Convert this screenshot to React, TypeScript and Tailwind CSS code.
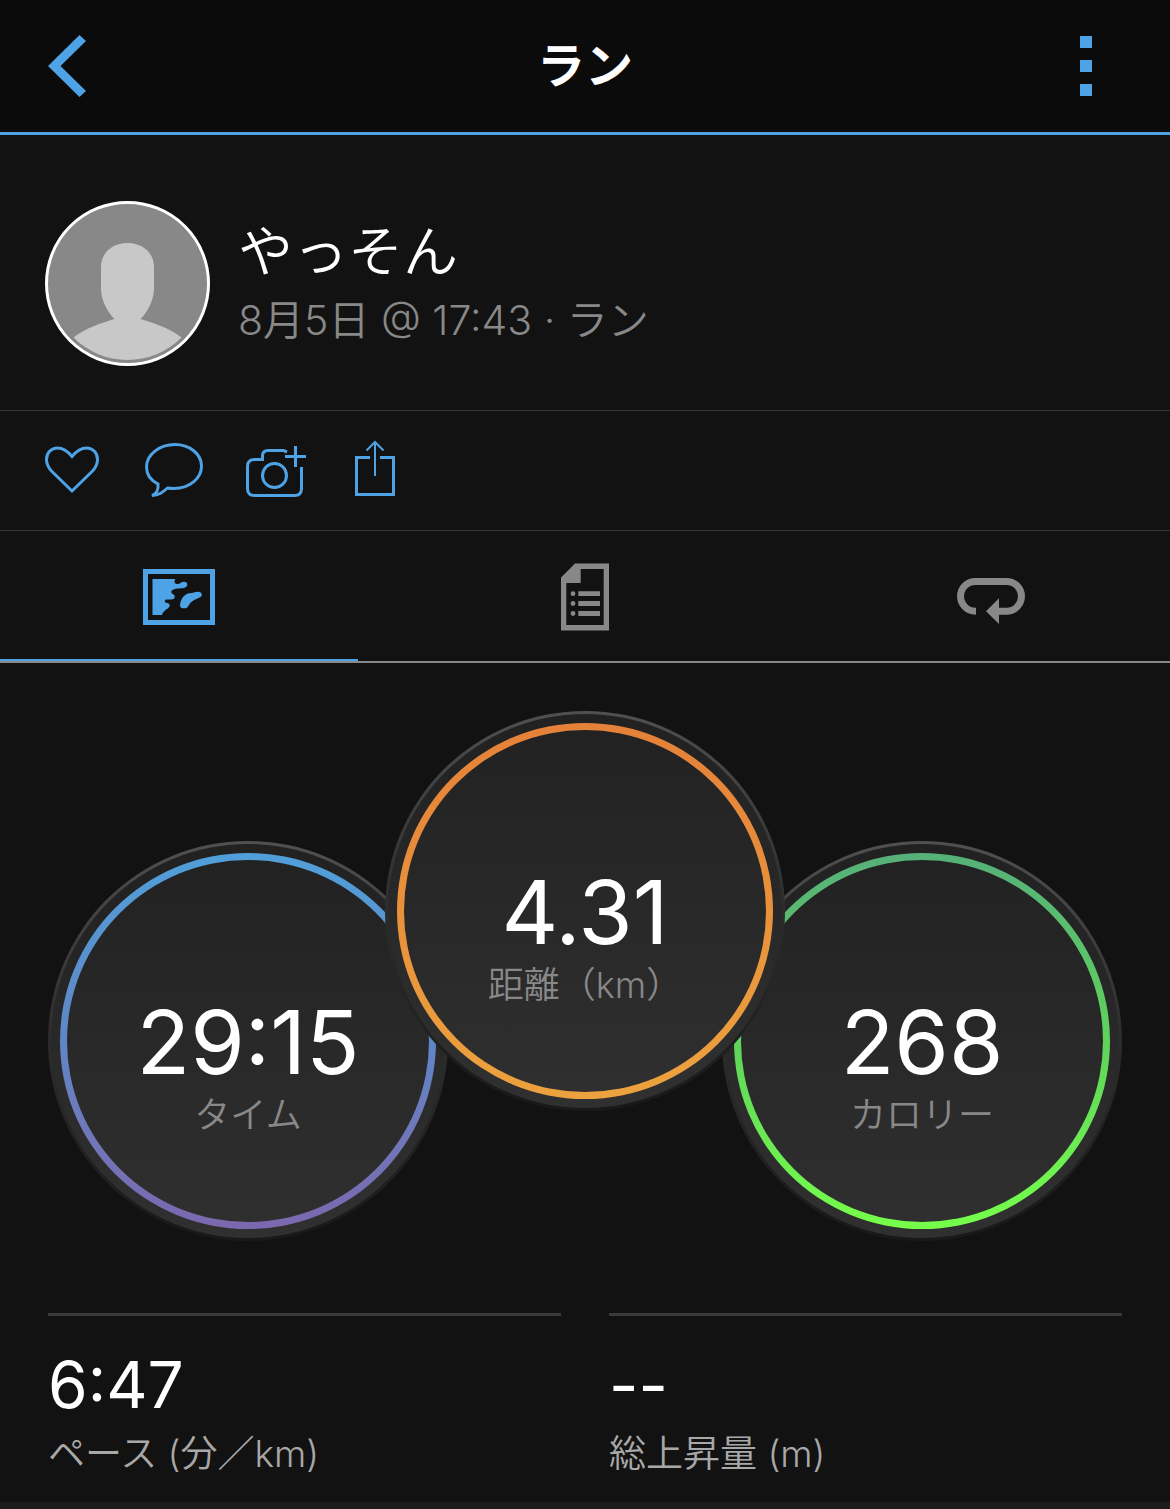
import { useState } from "react";
import clsx from "clsx";

const stats = [
  {
    value: "29:15",
    label: "タイム",
    ring: "from-[#509fd9] via-[#5f86c6] to-[#7b68ae]",
    place: "mt-[130px]",
  },
  {
    value: "4.31",
    label: "距離（km）",
    ring: "from-[#e58139] via-[#e8913c] to-[#eca23e]",
    place: "-mx-[63px] z-10",
  },
  {
    value: "268",
    label: "カロリー",
    ring: "from-[#56b078] via-[#5fd35a] to-[#76ff4a]",
    place: "mt-[130px]",
  },
];

const details = [
  { value: "6:47", label: "ペース (分／km)" },
  { value: "--", label: "総上昇量 (m)" },
];

function Avatar() {
  return (
    <svg width="165" height="165" viewBox="0 0 165 165" className="shrink-0">
      <circle cx="82.5" cy="82.5" r="81" fill="#888888" stroke="#ffffff" strokeWidth="3" />
      <path
        d="M82.5 42C98 42 109 52 109 66V88C109 99 102 112 95.5 118C108 122 125 127 136.5 136.5A76 76 0 0 1 28.5 136.5C40 127 57 122 69.5 118C63 112 56 99 56 88V66C56 52 67 42 82.5 42Z"
        fill="#c8c8c8"
      />
    </svg>
  );
}

function HeartIcon() {
  return (
    <svg width="60" height="60" viewBox="0 0 60 60" fill="none" stroke="currentColor" strokeWidth="3">
      <path d="M30 51L10 31.5C6.5 28 4.5 24 4.5 19.5C4.5 13 9 8 15.5 8C21.5 8 25.5 11 30 16.5C34.5 11 38.5 8 44.5 8C51 8 55.5 13 55.5 19.5C55.5 24 53.5 28 50 31.5Z" />
    </svg>
  );
}

function CommentIcon() {
  return (
    <svg width="60" height="60" viewBox="0 0 60 60" fill="none" stroke="currentColor" strokeWidth="3">
      <path d="M23.5 48C25.5 48.4 28 48.5 30 48.5C45.5 48.5 57.5 38.5 57.5 26C57.5 14 45.5 4.5 31 4.5C15.5 4.5 2.5 14.5 2.5 27C2.5 34.5 7 40.5 14 44C14.5 49 13 53.5 8 55.5C15 55.5 19 52 23.5 48Z" />
    </svg>
  );
}

function CameraPlusIcon() {
  return (
    <svg width="60" height="60" viewBox="0 0 60 60" fill="none" stroke="currentColor" strokeWidth="3">
      <path d="M55.5 27V48.5Q55.5 55.5 48.5 55.5H8.5Q1.5 55.5 1.5 48.5V26.5Q1.5 19.5 8.5 19.5H16.5V16Q16.5 10.5 22 10.5H37.5L41 12" />
      <circle cx="28.5" cy="35.5" r="12" />
      <path d="M49.5 6V27M39 16.5H60" />
    </svg>
  );
}

function ShareIcon() {
  return (
    <svg width="60" height="60" viewBox="0 0 60 60" fill="none" stroke="currentColor">
      <path d="M22 17.5H8.5V54.5H45.5V17.5H32" strokeWidth="3" />
      <path d="M27 2V36M18.5 10.5L27 2L35.5 10.5" strokeWidth="2" />
    </svg>
  );
}

function MapIcon() {
  return (
    <svg width="72" height="56" viewBox="0 0 72 56" fill="currentColor">
      <rect x="2.5" y="2.5" width="67" height="51" fill="none" stroke="currentColor" strokeWidth="5" />
      <path d="M9.5 10H32.3C30.5 13 32 15 34.5 15C37 15 38 12.7 41 12.7C44.5 12.7 45.5 16 43 18C41 19.5 39.5 19.3 36 19.4C32 19.5 28.3 20.5 28.3 23C28.3 25 31.7 25 31.7 27.5C31.7 29.5 30.8 30.5 28 30.5C25 30.5 21.7 30 21.7 32.3C21.7 34.5 26.7 33.5 26.7 36.3C26.7 39 24 39.5 22 41.5C20 43.5 19.5 44 19 46H9.5Z" />
      <path d="M37 36.5C37 31 41.5 24.3 46.5 24.3C50 24.3 52 22.7 55 22.7C59 22.7 59.8 26.5 57.5 28C55 29.5 52 30 49 32.5C44.5 36 46 39.3 41.5 39.3C38.5 39.3 37 38.5 37 36.5Z" />
    </svg>
  );
}

function NotesIcon() {
  return (
    <svg width="48" height="68" viewBox="0 0 48 68" fill="currentColor">
      <path
        fillRule="evenodd"
        d="M14 0.5H48V67.5H0V14.5ZM19.7 6V20H5.3V62H42.7V6Z"
      />
      <circle cx="12" cy="30.7" r="2.4" />
      <circle cx="12" cy="40.5" r="2.4" />
      <circle cx="12" cy="50.5" r="2.4" />
      <path d="M17.3 28.3H39V33H17.3ZM17.3 38H39V43H17.3ZM17.3 48H39V53H17.3Z" />
    </svg>
  );
}

function LapIcon() {
  return (
    <svg width="68" height="56" viewBox="0 -8 68 56" fill="none">
      <path
        d="M19 34.2H18.4A14.85 14.85 0 0 1 18.4 4.5H49.6A14.85 14.85 0 0 1 49.6 34.2H41"
        stroke="currentColor"
        strokeWidth="7"
      />
      <path d="M29 34.2L42 21.3V47Z" fill="currentColor" />
    </svg>
  );
}

const actions = [
  { name: "いいね", Icon: HeartIcon },
  { name: "コメント", Icon: CommentIcon },
  { name: "写真を追加", Icon: CameraPlusIcon },
  { name: "共有", Icon: ShareIcon },
];

const tabs = [
  { name: "概要", Icon: MapIcon },
  { name: "詳細", Icon: NotesIcon },
  { name: "ラップ", Icon: LapIcon },
];

export default function App() {
  const [activeTab, setActiveTab] = useState(0);

  return (
    <div className="flex min-h-screen flex-col bg-[#121212] font-['Inter','Noto_Sans_CJK_JP',sans-serif] text-white">
      <header className="flex h-[135px] items-center justify-between border-b-3 border-[#4da3e6] bg-[#0b0b0b] px-12">
        <button className="w-[72px] cursor-pointer text-[#4da3e6]" aria-label="戻る">
          <svg width="38" height="62" viewBox="0 0 38 62" fill="currentColor">
            <path d="M0 31L31.5 0L38 6L12.5 31L38 56L31.5 62Z" />
          </svg>
        </button>
        <h1 className="text-5xl font-bold">ラン</h1>
        <button className="flex w-[72px] cursor-pointer justify-center text-[#4da3e6]" aria-label="メニュー">
          <svg width="12" height="60" viewBox="0 0 12 60" fill="currentColor">
            <path d="M0 0H12V12H0ZM0 24H12V36H0ZM0 48H12V60H0Z" />
          </svg>
        </button>
      </header>

      <section className="flex items-center gap-7 border-b border-[#383838] px-[45px] pt-[66px] pb-11">
        <Avatar />
        <div>
          <h2 className="mb-1.5 text-[55px] leading-[66px] font-[350]">やっそん</h2>
          <p className="text-[41px] leading-[60px] font-[350] text-[#888888]">8月5日 @ 17:43 · ラン</p>
        </div>
      </section>

      <div className="flex h-[120px] items-center gap-[42px] border-b border-[#383838] px-[42px] pb-0.5 text-[#4da3e6]">
        {actions.map(({ name, Icon }) => (
          <button key={name} className="cursor-pointer" aria-label={name}>
            <Icon />
          </button>
        ))}
      </div>

      <nav className="grid grid-cols-3 gap-12 border-b-2 border-[#888888]">
        {tabs.map(({ name, Icon }, i) => (
          <button
            key={name}
            className={clsx(
              "flex h-[130px] cursor-pointer items-center justify-center border-b-2 pt-1",
              i === activeTab ? "border-[#4da3e6] text-[#4da3e6]" : "border-transparent text-[#888888]"
            )}
            onClick={() => setActiveTab(i)}
            aria-label={name}
          >
            <Icon />
          </button>
        ))}
      </nav>

      <section className="flex items-start justify-center px-12 pt-12 pb-[72px]">
        {stats.map((stat) => (
          <div
            key={stat.label}
            className={clsx(
              "size-[400px] shrink-0 rounded-full bg-linear-to-b from-[#505050] via-[#2c2c2c] to-[#191919] p-[3px]",
              stat.place
            )}
          >
            <div className="size-full rounded-full bg-linear-to-b from-[#212121] to-[#303030] p-[9px]">
              <div className={clsx("size-full rounded-full bg-linear-to-b p-[7px]", stat.ring)}>
                <div className="flex size-full flex-col items-center rounded-full bg-linear-to-b from-[#222222] to-[#2f2f2f] pt-[138px]">
                  <span className="text-[88px] leading-[88px]">{stat.value}</span>
                  <span className="mt-[5px] text-4xl leading-[48px] font-[350] text-[#888888]">{stat.label}</span>
                </div>
              </div>
            </div>
          </div>
        ))}
      </section>

      <section className="grid grid-cols-2 gap-12 px-12 pb-6">
        {details.map((item) => (
          <div key={item.label} className="border-t-3 border-[#3a3a3a] pt-[33px]">
            <p className="text-[64px] leading-[72px]">{item.value}</p>
            <p className="mt-[9px] text-[37px] leading-[48px] font-[350] text-[#a8a8a8]">{item.label}</p>
          </div>
        ))}
      </section>

      <div className="min-h-[7px] flex-1 bg-[#1c1c1c]" />
    </div>
  );
}
